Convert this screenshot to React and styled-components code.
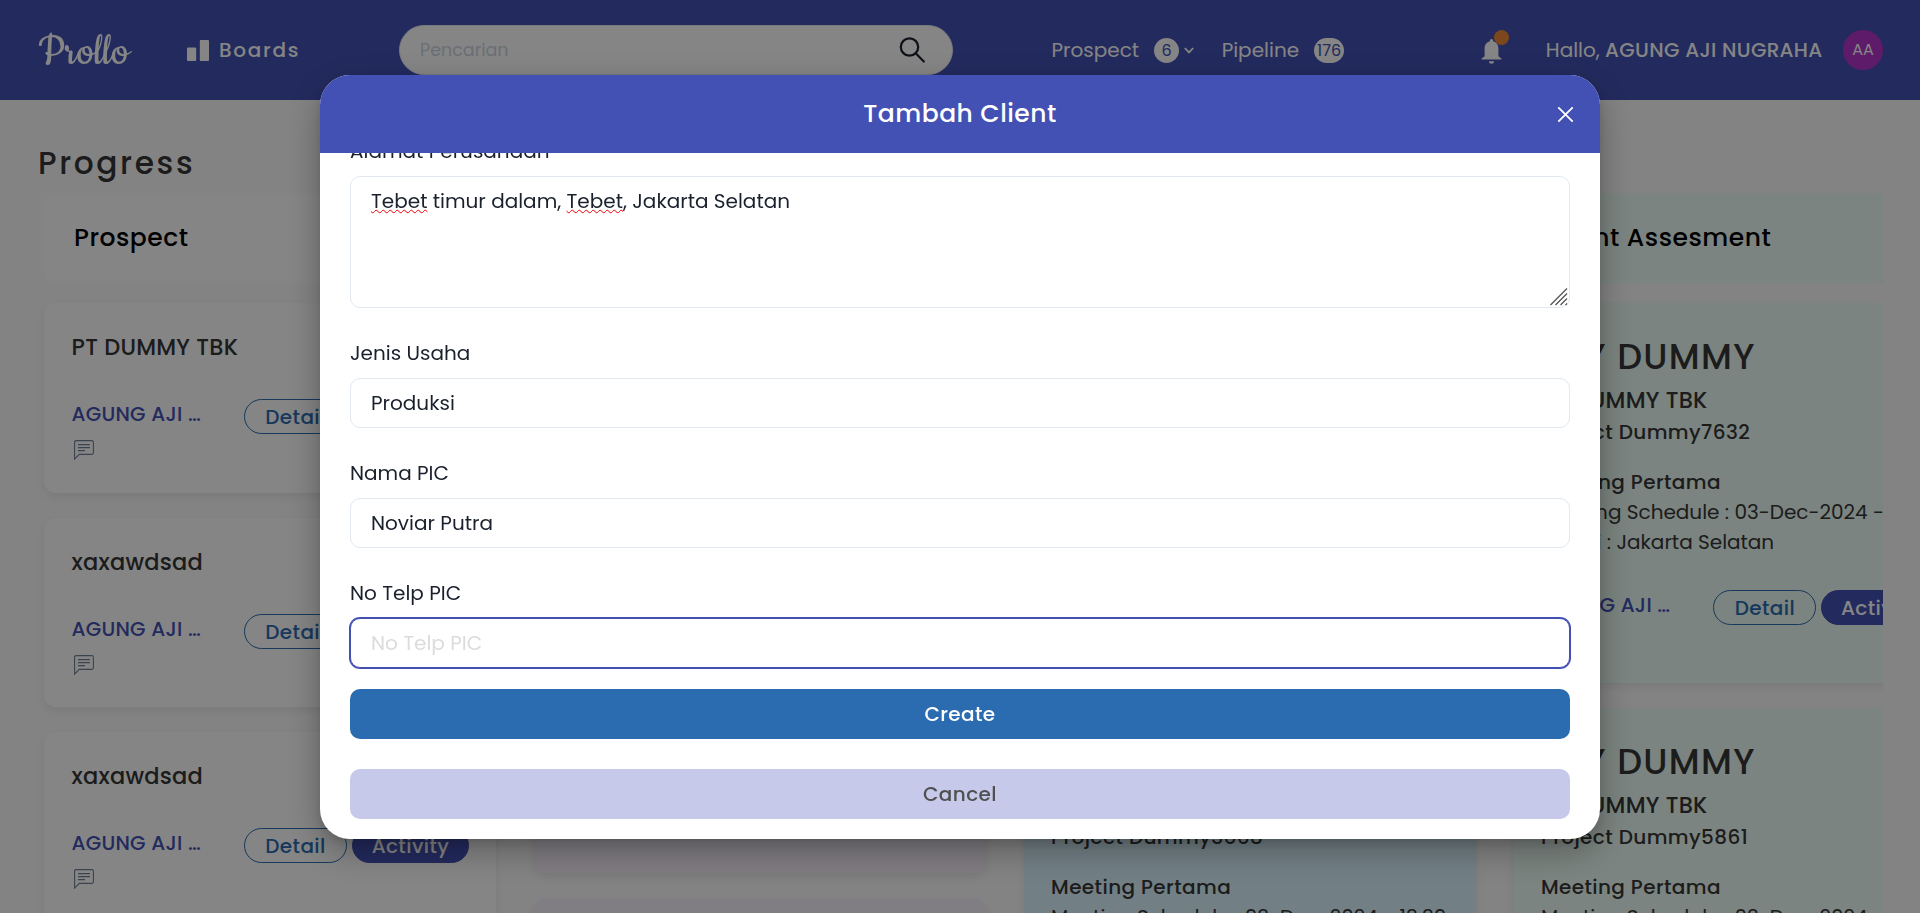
import React from "react";
import styled, { createGlobalStyle, css } from "styled-components";

const color = {
  brand: "#4351b4",
  blue: "#2b6cb0",
  ink: "#1a202c",
  heading: "#363636",
  page: "#fbfbfb",
};

const GlobalStyle = createGlobalStyle`
  *, *::before, *::after { box-sizing: border-box; }
  body {
    margin: 0;
    background: ${color.page};
    color: ${color.ink};
    font-family: Poppins, Inter, sans-serif;
    font-size: 20px;
    line-height: 1.5;
    overflow: hidden;
  }
  input, button { font: inherit; }
`;

const medium = css`
  font-weight: 500;
  letter-spacing: 0.02em;
`;

const Page = styled.div`
  height: 913px;
  overflow: hidden;
`;

/* ---------- top bar ---------- */

const TopBar = styled.header`
  display: flex;
  align-items: center;
  height: 100px;
  padding: 0 37px 0 38px;
  background: ${color.brand};
  color: #fff;
  white-space: nowrap;
`;

const Logo = styled.div`
  flex: none;
  width: 149px;
  padding-top: 5px;
  font-family: Cookie, "Liberation Serif", serif;
  font-size: 48.5px;
  line-height: 60px;
`;

const BoardsLink = styled.a`
  display: flex;
  align-items: center;
  gap: 10px;
  width: 212px;
  font-weight: 500;
  letter-spacing: 1.7px;
`;

const SearchBox = styled.div`
  display: flex;
  align-items: center;
  justify-content: space-between;
  width: 554px;
  height: 50px;
  padding: 0 27px 0 20px;
  border: 1px solid #e2e8f0;
  border-radius: 25px;
  background: #fff;
  color: ${color.ink};
`;

const SearchInput = styled.input`
  flex: 1;
  min-width: 0;
  padding: 0;
  border: 0;
  outline: 0;
  background: none;
  font-size: 17.5px;
  &::placeholder { color: #cbd5e0; opacity: 1; }
`;

const NavCount = styled.div`
  display: flex;
  align-items: center;
  margin-left: ${(p) => p.$before}px;
`;

const CountBadge = styled.span`
  min-width: 25px;
  height: 25px;
  margin-left: 15px;
  padding: 0 3px;
  border-radius: 13px;
  background: #fff;
  color: ${color.brand};
  font-size: 16px;
  line-height: 26px;
  text-align: center;
`;

const Chevron = styled.svg`
  margin-left: 5px;
`;

const BellButton = styled.div`
  position: relative;
  width: 28px;
  height: 40px;
  margin-left: 136.5px;
`;

const BellIcon = styled.svg`
  display: block;
  margin-top: 9px;
`;

const BellDot = styled.span`
  position: absolute;
  top: 0;
  left: 13px;
  width: 15px;
  height: 15px;
  border-radius: 50%;
  background: #ed8936;
`;

const Greeting = styled.div`
  margin-left: auto;
  strong { font-weight: 500; letter-spacing: 0.3px; }
`;

const Avatar = styled.div`
  display: grid;
  place-items: center;
  width: 40px;
  height: 40px;
  margin-left: 20.5px;
  border-radius: 50%;
  background: #b334ca;
  font-size: 16px;
`;

/* ---------- board ---------- */

const Main = styled.main`
  padding: 37px 37px 0 38px;
`;

const PageTitle = styled.h1`
  height: 56px;
  margin: 0;
  color: ${color.heading};
  font-size: 31.25px;
  font-weight: 500;
  line-height: 52px;
  letter-spacing: 2.6px;
`;

const Board = styled.div`
  display: flex;
  gap: 37.8px;
  height: 720px;
  padding-left: 6px;
  overflow: hidden;
`;

const Column = styled.section`
  display: flex;
  flex: none;
  flex-direction: column;
  gap: 25px;
  width: 452px;
`;

const surface = css`
  background: ${(p) => p.$tint};
  border-radius: 12px;
`;

const ColumnHead = styled.h2`
  ${surface}
  ${medium}
  flex: none;
  height: 90px;
  margin: 0 0 -5px;
  padding: 0 30px;
  color: #000;
  font-size: 25px;
  line-height: 90px;
`;

const Card = styled.article`
  ${surface}
  flex: none;
  display: flex;
  flex-direction: column;
  height: ${(p) => p.$height}px;
  padding: 27px 0 0 27.5px;
  box-shadow: 0 4px 8px rgba(0, 0, 0, 0.07);
  color: ${color.heading};
  white-space: nowrap;
`;

const CardTitle = styled.h3`
  margin: 0;
  font-size: 35px;
  font-weight: 500;
  line-height: 53px;
  letter-spacing: 1.35px;
`;

const Company = styled.div`
  font-size: 22.5px;
  font-weight: 500;
  line-height: 34px;
  letter-spacing: 0.25px;
`;

const Project = styled.div`
  ${medium}
`;

const Meeting = styled.div`
  margin-top: 20px;
  p { margin: 0; }
  p:first-child { ${medium} }
`;

const CardFoot = styled.div`
  display: flex;
  align-items: flex-start;
  margin-top: ${(p) => p.$gap}px;
`;

const Owner = styled.div`
  flex: none;
  width: 172.5px;
  color: ${color.brand};
  font-weight: 500;
  letter-spacing: 0.25px;
`;

const CommentIcon = styled.svg`
  display: block;
  margin: 11px 0 0 2px;
  color: #718096;
`;

const PillButton = styled.button`
  ${medium}
  flex: none;
  width: ${(p) => (p.$solid ? 117 : 103)}px;
  height: 35px;
  margin: 0 5px 0 0;
  padding: 0;
  border: 1px solid ${(p) => (p.$solid ? color.brand : color.blue)};
  border-radius: 18px;
  background: ${(p) => (p.$solid ? color.brand : "transparent")};
  color: ${(p) => (p.$solid ? "#fff" : color.blue)};
  line-height: 34px;
`;

/* ---------- dialog ---------- */

const Overlay = styled.div`
  position: fixed;
  inset: 0;
  display: flex;
  align-items: flex-start;
  justify-content: center;
  padding-top: 75px;
  background: rgba(0, 0, 0, 0.48);
`;

const Dialog = styled.div`
  display: flex;
  flex-direction: column;
  width: 1280px;
  height: 764px;
  overflow: hidden;
  border-radius: 30px;
  background: #fff;
  box-shadow: 0 5px 10px rgba(0, 0, 0, 0.1), 0 12px 35px rgba(0, 0, 0, 0.3);
`;

const DialogHead = styled.header`
  ${medium}
  position: relative;
  flex: none;
  height: 78px;
  background: ${color.brand};
  color: #fff;
  font-size: 25px;
  line-height: 77px;
  text-align: center;
`;

const CloseButton = styled.button`
  position: absolute;
  top: 31px;
  right: 26px;
  width: 17px;
  height: 17px;
  padding: 0;
  border: 0;
  background: none;
  color: inherit;
  line-height: 0;
`;

const DialogBody = styled.form`
  flex: 1;
  min-height: 0;
  display: flex;
  flex-direction: column;
  justify-content: flex-end;
  gap: 30px;
  padding: 0 30px 20px;
  overflow: hidden;
`;

const Field = styled.div`
  flex: none;
  display: flex;
  flex-direction: column;
  gap: 10px;
  margin-bottom: ${(p) => (p.$last ? -9 : 0)}px;
`;

const Label = styled.label`
  height: 30px;
`;

const control = css`
  width: 100%;
  border: 1px solid #e2e8f0;
  border-radius: 10px;
  background: #fff;
  color: ${color.ink};
`;

const Input = styled.input`
  ${control}
  height: 50px;
  padding: 0 20px;
  outline: 0;
  &::placeholder { color: #dcdcdc; opacity: 1; }
  ${(p) => p.$focused && css`
    border-color: ${color.brand};
    box-shadow: 0 0 0 1px ${color.brand};
  `}
`;

const Textarea = styled.div`
  ${control}
  display: flex;
  flex-direction: column;
  justify-content: space-between;
  height: 132px;
  padding: 9px 1px 1px 20px;
`;

const Misspelled = styled.span`
  text-decoration: underline wavy #f00000 1px;
  text-decoration-skip-ink: none;
  text-underline-offset: 1px;
`;

const Grip = styled.svg`
  align-self: flex-end;
`;

const ActionButton = styled.button`
  ${medium}
  flex: none;
  height: 50px;
  border: 0;
  border-radius: 10px;
  background: ${(p) => (p.$primary ? color.blue : "#c6c9e9")};
  color: ${(p) => (p.$primary ? "#fff" : "#505050")};
`;

const tint = {
  prospect: "#ffffff",
  contact: "#f6effb",
  proposal: "#dbf5ff",
  assessment: "#ecfdf5",
};

function CardActions({ gap }) {
  return (
    <CardFoot $gap={gap}>
      <Owner>
        AGUNG AJI …
        <CommentIcon width="20" height="20" viewBox="0 0 20 20" fill="none" stroke="currentColor" strokeWidth="1.1">
          <path d="M.6 19.1V2.2Q.6.6 2.2.6h15.600Q19.400.6 19.400 2.200v10.600q0 1.600-1.600 1.600H5.300z" />
          <path d="M4 4.600h12M4 7.600h12M4 10.600h7" />
        </CommentIcon>
      </Owner>
      <PillButton>Detail</PillButton>
      <PillButton $solid>Activity</PillButton>
    </CardFoot>
  );
}

function ProspectCard({ name }) {
  return (
    <Card $tint={tint.prospect} $height={189.5}>
      <Company>{name}</Company>
      <CardActions gap={35} />
    </Card>
  );
}

function ProjectCard({ background, project, schedule }) {
  return (
    <Card $tint={background} $height={380}>
      <CardTitle>PTY DUMMY</CardTitle>
      <Company>PT DUMMY TBK</Company>
      <Project>{project}</Project>
      <Meeting>
        <p>Meeting Pertama</p>
        <p>Meeting Schedule : {schedule}</p>
        <p>Lokasi : Jakarta Selatan</p>
      </Meeting>
      <CardActions gap={33} />
    </Card>
  );
}

export default function App() {
  return (
    <>
      <GlobalStyle />
      <Page>
        <TopBar>
          <Logo>Prollo</Logo>
          <BoardsLink>
            <svg width="22" height="21" fill="currentColor">
              <rect x="0" y="7.500" width="9.200" height="13.500" rx="1" />
              <rect x="12.800" y="0" width="9.200" height="21" rx="1" />
            </svg>
            Boards
          </BoardsLink>
          <SearchBox>
            <SearchInput placeholder="Pencarian" />
            <svg width="26" height="26" viewBox="0 0 26 26" fill="none" stroke="currentColor" strokeWidth="2.200" strokeLinecap="round">
              <circle cx="10.500" cy="10" r="8.700" />
              <path d="M16.700 16.200l8.100 8.300" />
            </svg>
          </SearchBox>
          <NavCount $before={98.5}>
            Prospect
            <CountBadge>6</CountBadge>
            <Chevron width="10" height="7" viewBox="0 0 10 7" fill="none" stroke="currentColor" strokeWidth="1.800">
              <path d="M.8 1L5 5.400 9.200 1" />
            </Chevron>
          </NavCount>
          <NavCount $before={27.5}>
            Pipeline
            <CountBadge>176</CountBadge>
          </NavCount>
          <BellButton>
            <BellIcon width="21" height="25" viewBox="0 0 21 25" fill="currentColor">
              <path d="M8.800 1.700a1.700 1.700 0 013.400 0v.5c3.200.8 5.200 3.500 5.200 6.800v8.200l3 2.200v1.100H.6v-1.100l3-2.200V9c0-3.300 2-6 5.200-6.800zM8 22.200h5a2.500 2.500 0 01-5 0z" />
            </BellIcon>
            <BellDot />
          </BellButton>
          <Greeting>
            Hallo, <strong>AGUNG AJI NUGRAHA</strong>
          </Greeting>
          <Avatar>AA</Avatar>
        </TopBar>

        <Main>
          <PageTitle>Progress</PageTitle>
          <Board>
            <Column>
              <ColumnHead $tint={tint.prospect}>Prospect</ColumnHead>
              <ProspectCard name="PT DUMMY TBK" />
              <ProspectCard name="xaxawdsad" />
              <ProspectCard name="xaxawdsad" />
            </Column>
            <Column>
              <ColumnHead $tint={tint.contact} />
              <Card $tint={tint.contact} $height={570} />
              <Card $tint={tint.contact} $height={380} />
            </Column>
            <Column>
              <ColumnHead $tint={tint.proposal} />
              <ProjectCard background={tint.proposal} project="Project Dummy7668" schedule="03-Dec-2024 - 13:30" />
              <ProjectCard background={tint.proposal} project="Project Dummy3668" schedule="03-Dec-2024 - 13:30" />
            </Column>
            <Column>
              <ColumnHead $tint={tint.assessment}>Client Assesment</ColumnHead>
              <ProjectCard background={tint.assessment} project="Project Dummy7632" schedule="03-Dec-2024 - 13:30" />
              <ProjectCard background={tint.assessment} project="Project Dummy5861" schedule="03-Dec-2024" />
            </Column>
          </Board>
        </Main>
      </Page>

      <Overlay>
        <Dialog role="dialog" aria-label="Tambah Client">
          <DialogHead>
            Tambah Client
            <CloseButton type="button" aria-label="Close">
              <svg width="17" height="17" viewBox="0 0 17 17" stroke="currentColor" strokeWidth="1.800">
                <path d="M1.300 1.300l14.400 14.400M15.700 1.300L1.300 15.700" />
              </svg>
            </CloseButton>
          </DialogHead>
          <DialogBody>
            <Field>
              <Label>Alamat Perusahaan</Label>
              <Textarea>
                <div>
                  <Misspelled>Tebet</Misspelled> timur dalam, <Misspelled>Tebet</Misspelled>, Jakarta Selatan
                </div>
                <Grip width="18" height="18" fill="none" stroke="#555" strokeWidth="1.300">
                  <path d="M.5 17L17 .5M5.500 17L17 5.500M10.500 17l6.500-6.500M15.500 17l1.500-1.500" />
                </Grip>
              </Textarea>
            </Field>
            <Field>
              <Label>Jenis Usaha</Label>
              <Input defaultValue="Produksi" />
            </Field>
            <Field>
              <Label>Nama PIC</Label>
              <Input defaultValue="Noviar Putra" />
            </Field>
            <Field $last>
              <Label>No Telp PIC</Label>
              <Input $focused placeholder="No Telp PIC" />
            </Field>
            <ActionButton $primary>Create</ActionButton>
            <ActionButton type="button">Cancel</ActionButton>
          </DialogBody>
        </Dialog>
      </Overlay>
    </>
  );
}
